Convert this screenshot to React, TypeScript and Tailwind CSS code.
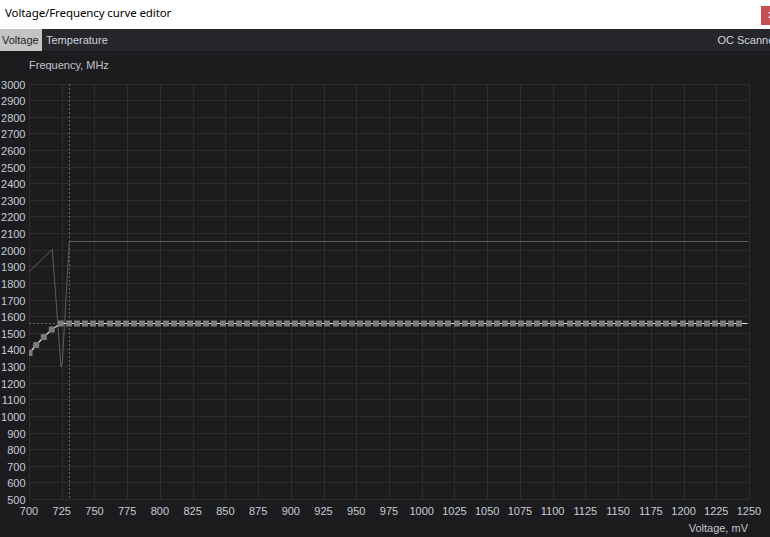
import React from 'react';

// V/F curve editor window (cropped)
const X0 = 29;
const X1 = 749;
const Y0 = 83.5;
const Y1 = 499;
const TOP = 77; // page y where the svg starts

const vx = (i: number) => X0 + (i * (X1 - X0)) / 22;
const fy = (j: number) => Y0 + (j * (Y1 - Y0)) / 25;

const voltLabels = Array.from({ length: 23 }, (_, i) => 700 + i * 25);
const freqLabels = Array.from({ length: 26 }, (_, j) => 3000 - j * 100);

// curve points, measured off the editor
const firstPts: [number, number][] = [
  [29.5, 353],
  [36.2, 345],
  [43.8, 337],
  [51.8, 329.5],
  [60.8, 323.5],
];
const flatPts: [number, number][] = Array.from({ length: 84 }, (_, k) => [
  Math.round(69.2 + k * 8.07),
  323.5,
]);
const pts = [...firstPts, ...flatPts];

function Chart() {
  const linePts = [...pts.map(([x, y]) => `${x},${y}`), `747.5,323.5`].join(' ');
  const ghost = '29,271.7 52.3,249.3 61,367 62.3,362 69.3,241.5 748,241.5';

  return (
    <svg width={770} height={444} viewBox={`0 ${TOP} 770 444`} className="block">
      <g shapeRendering="crispEdges" stroke="#2d2d31" strokeWidth={1}>
        {voltLabels.map((_, i) => (
          <line key={'v' + i} x1={Math.round(vx(i)) + 0.5} x2={Math.round(vx(i)) + 0.5} y1={Y0} y2={Y1} />
        ))}
        {freqLabels.map((_, j) => (
          <line key={'h' + j} x1={X0} x2={X1} y1={Math.round(fy(j)) + 0.5} y2={Math.round(fy(j)) + 0.5} />
        ))}
      </g>

      {/* dashed cursor lines */}
      <g stroke="#66666a" strokeWidth={1} strokeDasharray="2 2" shapeRendering="crispEdges">
        <line x1={69.5} x2={69.5} y1={Y0} y2={Y1} />
        <line x1={X0} x2={X1} y1={323.5} y2={323.5} />
      </g>

      <polyline points={ghost} fill="none" stroke="#5e5e60" strokeWidth={1} />
      <polyline points={linePts} fill="none" stroke="#e2e2e2" strokeWidth={1.2} />
      <g fill="#7c7c7c">
        {pts.map(([x, y], i) => (
          <rect key={i} x={x - 3} y={y - 3} width={6} height={6} />
        ))}
      </g>
      {/* clip first square to the plot */}
      <rect x={0} y={340} width={X0} height={20} fill="#1c1c1f" />

      <g fill="#c6ccd5" fontFamily='"Liberation Sans", Arial, sans-serif' fontSize={11}>
        {freqLabels.map((f, j) => (
          <text key={'fl' + f} x={25.5} y={Math.round(fy(j)) + 4.5} textAnchor="end">
            {f}
          </text>
        ))}
        {voltLabels.map((v, i) => (
          <text key={'vl' + v} x={vx(i)} y={515} textAnchor="middle">
            {v}
          </text>
        ))}
      </g>
    </svg>
  );
}

export default function App() {
  return (
    <div className="flex h-[537px] w-[770px] flex-col overflow-hidden bg-[#1c1c1f] font-['Liberation_Sans',Arial,sans-serif]">
      <div className="flex h-[29px] shrink-0 items-start bg-white">
        <div className="pl-[5px] pt-[5px] font-['Noto_Sans',sans-serif] text-[11.5px] leading-[16px] tracking-[-0.1px] text-black">
          Voltage/Frequency curve editor
        </div>
        <div className="ml-auto mt-[6px] flex h-[19px] w-[9px] shrink-0 items-center overflow-hidden bg-[#c75050] pl-[6px] text-[11px] text-white">
          ✕
        </div>
      </div>

      <div className="flex h-[22px] shrink-0 items-stretch bg-[#26262b] text-[11px] leading-[22px]">
        <div className="w-[42px] bg-[#c4c4c4] pl-[2px] text-[#1e1e1e]">Voltage</div>
        <div className="pl-[4px] text-[#cdd5df]">Temperature</div>
        <div className="-mr-[8px] ml-auto whitespace-nowrap text-[#cdd5df]">OC Scanner</div>
      </div>

      <div className="flex flex-1 flex-col">
        <div className="h-[26px] shrink-0 pl-[29px] pt-[7px] text-[11px] leading-[14px] text-[#c2c6cc]">
          Frequency, MHz
        </div>
        <Chart />
        <div className="pr-[22px] text-right text-[11px] leading-[14px] text-[#c2c6cc]">Voltage, mV</div>
      </div>
    </div>
  );
}
